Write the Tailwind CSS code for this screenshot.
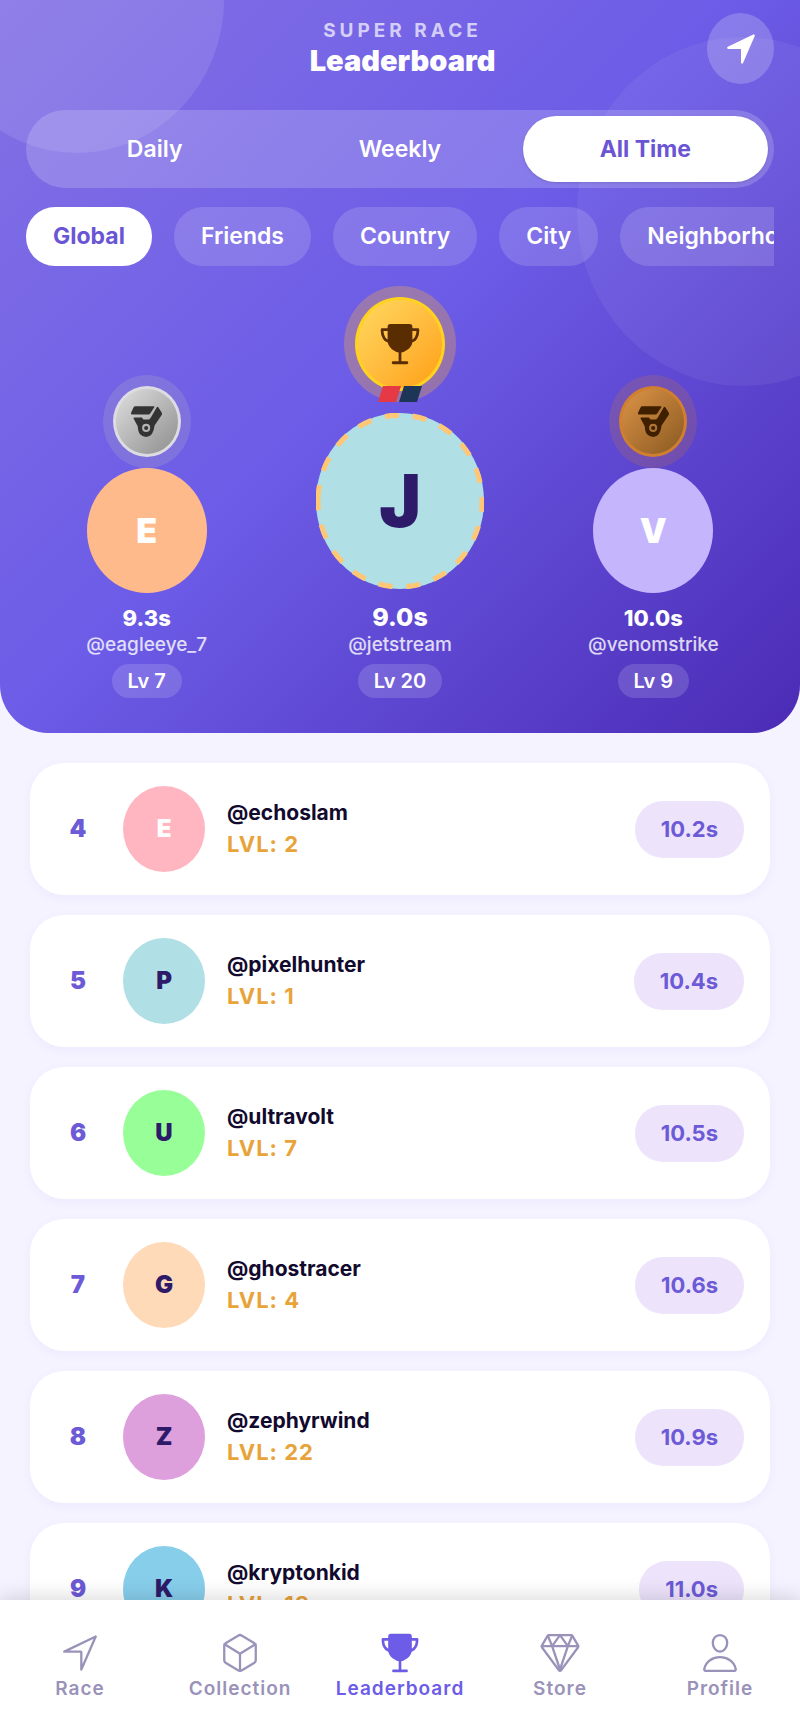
<!DOCTYPE html>
<html lang="en">
<head>
  <meta charset="UTF-8" />
  <meta name="viewport" content="width=device-width, initial-scale=1" />
  <title>Super Race - Leaderboard</title>
  <script src="https://cdn.jsdelivr.net/npm/@tailwindcss/browser@4"></script>
</head>
<body class="h-screen flex flex-col overflow-hidden bg-[#f5f3ff] font-['Inter',sans-serif]">

  <!-- Shared icons -->
  <svg class="hidden">
    <symbol id="icon-trophy" viewBox="0 0 512 512" preserveAspectRatio="none">
      <g fill="none" stroke="currentColor" stroke-width="32" stroke-linecap="round" stroke-linejoin="round">
        <path d="M176 464h160M256 464V336" />
        <path fill="currentColor" d="M384 224c0-50.64-.08-134.63-.12-160a16 16 0 00-16-16l-223.79.26a16 16 0 00-16 15.95c0 30.58-.13 129.17-.13 159.79 0 64.28 83 112 128 112S384 288.28 384 224z" />
        <path d="M128 96H48v16c0 55.22 33.55 112 80 112M384 96h80v16c0 55.22-33.55 112-80 112" />
      </g>
    </symbol>
    <symbol id="icon-medal" viewBox="0 0 92 92" preserveAspectRatio="none">
      <g fill="currentColor" fill-rule="evenodd">
        <path d="M13 1H68Q71 1 69 4L57 22Q55 25 52 25H3Q-1 25 0 21L7 5Q9 1 13 1Z" />
        <path d="M77 3Q79 1 81 4L91 19Q93 23 91 27L70 58Q68 75 62 83Q55 92 45 92Q34 92 27 84Q21 77 20 60L8 38Q6 34 10 34H32Q33 34 34 36L37 40H54L59 34ZM45 53A12 12 0 1 0 45 77A12 12 0 1 0 45 53ZM45 59A6 6 0 1 1 45 71A6 6 0 1 1 45 59Z" />
      </g>
    </symbol>
  </svg>

  <header class="relative shrink-0 overflow-hidden rounded-b-[48px] bg-linear-[135deg,#8371e4_0%,#6c5ce7_48%,#4b2bb5_100%] pt-[13px] pb-[35px] text-white">
    <div class="absolute -left-[70px] -top-[154px] w-[294px] h-[307px] rounded-[50%] bg-white/10"></div>
    <div class="absolute left-[577px] top-[37px] w-[332px] h-[349px] rounded-[50%] bg-white/6"></div>

    <div class="relative px-[26px]">
      <!-- Title -->
      <div class="grid grid-cols-[72px_1fr_67px] items-center">
        <div class="col-start-2 text-center">
          <p class="text-[19px] leading-6 font-bold tracking-[4px] text-white/70">SUPER RACE</p>
          <h1 class="text-[29px] leading-9 font-black">Leaderboard</h1>
        </div>
        <button aria-label="Share location" class="w-[67px] h-[71px] rounded-[50%] bg-white/20 flex items-center justify-center">
          <svg class="w-[34px] h-9" viewBox="0 0 512 512" preserveAspectRatio="none" fill="currentColor"><path d="M272 464a16 16 0 01-16-16.42V264.13a8 8 0 00-8-8H64.41a16.31 16.31 0 01-15.49-10.65 16 16 0 018.41-19.87l384-176.15a16 16 0 0121.22 21.19l-176 384A16 16 0 01272 464z" /></svg>
        </button>
      </div>

      <!-- Period -->
      <div class="mt-[26px] grid grid-cols-3 rounded-[39px] bg-white/18 p-1.5 text-[23px] font-semibold">
        <button class="h-[66px] rounded-[33px]">Daily</button>
        <button class="h-[66px] rounded-[33px]">Weekly</button>
        <button class="h-[66px] rounded-[33px] bg-white text-[#6a55d4] font-bold shadow-sm">All Time</button>
      </div>

      <!-- Scope -->
      <div class="mt-[19px] flex gap-[22px] overflow-x-auto [scrollbar-width:none] text-[23px] font-semibold">
        <button class="h-[59px] shrink-0 rounded-[29px] px-[27px] bg-white text-[#6a55d4] font-bold">Global</button>
        <button class="h-[59px] shrink-0 rounded-[29px] px-[27px] bg-white/15">Friends</button>
        <button class="h-[59px] shrink-0 rounded-[29px] px-[27px] bg-white/15">Country</button>
        <button class="h-[59px] shrink-0 rounded-[29px] px-[27px] bg-white/15">City</button>
        <button class="h-[59px] shrink-0 rounded-[29px] px-[27px] bg-white/15">Neighborhood</button>
      </div>
    </div>

    <!-- Podium -->
    <section class="relative mt-5 px-5 grid grid-cols-3 items-end text-center">
      <div class="flex flex-col items-center">
        <div class="rounded-[50%] bg-[#c0c0c0]/20 px-[10px] py-[11px]">
          <div class="w-[68px] h-[71px] rounded-[50%] border-3 border-[#dcdce2] bg-linear-135 from-[#e0e0e0] to-[#8e8e8e] text-[#333] flex items-center justify-center">
            <svg class="w-[31px] h-[31px]"><use href="#icon-medal" /></svg>
          </div>
        </div>
        <div class="w-[120px] h-[125px] rounded-[50%] bg-[#ffba8c] flex items-center justify-center text-[34px] font-black">E</div>
        <p class="mt-[11px] text-[22px] leading-7 font-extrabold">9.3s</p>
        <p class="mt-px text-[19px] leading-6 font-medium text-white/80">@eagleeye_7</p>
        <p class="mt-[7px] h-[34px] rounded-[17px] bg-white/15 px-4 text-[20px] leading-[34px] font-semibold">Lv 7</p>
      </div>

      <div class="flex flex-col items-center">
        <div class="relative rounded-[50%] bg-[#ffb432]/30 p-[11px]">
          <div class="w-[90px] h-[94px] rounded-[50%] border-3 border-[#ffd21f] bg-linear-135 from-[#ffd95e] to-[#ff9f0a] text-[#5a2d00] flex items-center justify-center">
            <svg class="w-[44px] h-[46px]"><use href="#icon-trophy" /></svg>
          </div>
          <svg class="absolute left-[34px] bottom-0 w-[45px] h-4" viewBox="0 0 45 16"><path fill="#e63946" d="M5 0H23L18 16H0Z" /><path fill="#1d3557" d="M26 0H44L39 16H21Z" /></svg>
        </div>
        <div class="mt-[11px]">
          <svg class="w-[168px] h-[176px]" viewBox="0 0 168 168" preserveAspectRatio="none">
            <circle cx="84" cy="84" r="84" fill="#b0dfe5" />
            <circle cx="84" cy="84" r="82" fill="none" stroke="#fdc776" stroke-width="5" stroke-dasharray="14 14" transform="rotate(181 84 84)" />
            <text x="84" y="109" text-anchor="middle" fill="#2d1b69" class="text-[70px] font-black">J</text>
          </svg>
        </div>
        <p class="mt-[14px] text-[25px] leading-7 font-extrabold">9.0s</p>
        <p class="mt-[2px] text-[19px] leading-6 font-medium text-white/80">@jetstream</p>
        <p class="mt-[7px] h-[34px] rounded-[17px] bg-white/15 px-4 text-[20px] leading-[34px] font-semibold">Lv 20</p>
      </div>

      <div class="flex flex-col items-center">
        <div class="rounded-[50%] bg-[#cd7f32]/20 px-[10px] py-[11px]">
          <div class="w-[68px] h-[71px] rounded-[50%] border-3 border-[#d07f30] bg-linear-135 from-[#dd9447] to-[#8b5a22] text-[#3e1f00] flex items-center justify-center">
            <svg class="w-[31px] h-[31px]"><use href="#icon-medal" /></svg>
          </div>
        </div>
        <div class="w-[120px] h-[125px] rounded-[50%] bg-[#c4b5fd] flex items-center justify-center text-[34px] font-black">V</div>
        <p class="mt-[11px] text-[22px] leading-7 font-extrabold">10.0s</p>
        <p class="mt-px text-[19px] leading-6 font-medium text-white/80">@venomstrike</p>
        <p class="mt-[7px] h-[34px] rounded-[17px] bg-white/15 px-4 text-[20px] leading-[34px] font-semibold">Lv 9</p>
      </div>
    </section>
  </header>

  <!-- Ranking list, filled below -->
  <main class="flex-1 min-h-0 overflow-y-auto [scrollbar-width:none] px-[30px] pt-[30px] pb-5">
    <ol id="rankList" class="flex flex-col gap-5"></ol>
  </main>

  <!-- Bottom navigation -->
  <nav class="relative z-10 shrink-0 h-[131px] bg-white shadow-[0_-2px_20px_rgba(0,0,0,0.16)] grid grid-cols-5 pt-[31px] text-[19px] leading-6 font-semibold tracking-[1px] text-[#9a92b9]">
    <a href="#" class="flex flex-col items-center gap-[2px]">
      <svg class="w-[42px] h-11" viewBox="0 0 512 512" preserveAspectRatio="none" fill="none" stroke="currentColor" stroke-width="28" stroke-linecap="round" stroke-linejoin="round"><path d="M448 64L64 240.14h200a8 8 0 018 8V448z" /></svg>
      Race
    </a>
    <a href="#" class="flex flex-col items-center gap-[2px]">
      <svg class="w-[42px] h-11" viewBox="0 0 512 512" preserveAspectRatio="none" fill="none" stroke="currentColor" stroke-width="28" stroke-linecap="round" stroke-linejoin="round"><path d="M448 341.37V170.61A32 32 0 00432.11 143l-152-88.46a47.94 47.94 0 00-48.24 0L79.89 143A32 32 0 0064 170.61v170.76A32 32 0 0079.89 369l152 88.46a48 48 0 0048.24 0l152-88.46A32 32 0 00448 341.37z" /><path d="M69 153.99l187 110 187-110M256 463.99v-200" /></svg>
      Collection
    </a>
    <a href="#" class="flex flex-col items-center gap-[2px] text-[#6c5ce7]">
      <svg class="w-[42px] h-11"><use href="#icon-trophy" /></svg>
      Leaderboard
    </a>
    <a href="#" class="flex flex-col items-center gap-[2px]">
      <svg class="w-[42px] h-11" viewBox="0 0 512 512" preserveAspectRatio="none" fill="none" stroke="currentColor" stroke-width="28" stroke-linecap="round" stroke-linejoin="round"><path d="M35.42 188.21l207.75 269.46a16.17 16.17 0 0025.66 0l207.75-269.46a16.52 16.52 0 00.95-18.75L407.06 55.71A16.22 16.22 0 00393.27 48H118.73a16.22 16.22 0 00-13.79 7.71L34.47 169.46a16.52 16.52 0 00.95 18.75zM48 176h416" /><path d="M400 64l-48 112-96-128M112 64l48 112 96-128M256 448l-96-272M256 448l96-272" /></svg>
      Store
    </a>
    <a href="#" class="flex flex-col items-center gap-[2px]">
      <svg class="w-[42px] h-11" viewBox="0 0 512 512" preserveAspectRatio="none" fill="none" stroke="currentColor" stroke-width="28" stroke-linecap="round" stroke-linejoin="round"><path d="M344 144c-3.92 52.87-44 96-88 96s-84.15-43.12-88-96c-4-55 35-96 88-96s92 42 88 96z" /><path d="M256 304c-87 0-175.3 48-191.64 138.6C62.39 453.52 68.57 464 80 464h352c11.44 0 17.62-10.48 15.65-21.4C431.3 352 343 304 256 304z" /></svg>
      Profile
    </a>
  </nav>

  <script>
    const players = [
      { rank: 4, name: "echoslam", level: 2, time: "10.2s", avatar: "bg-[#ffb6c1] text-white" },
      { rank: 5, name: "pixelhunter", level: 1, time: "10.4s", avatar: "bg-[#b0dfe5] text-[#2d1b69]" },
      { rank: 6, name: "ultravolt", level: 7, time: "10.5s", avatar: "bg-[#98ff98] text-[#2d1b69]" },
      { rank: 7, name: "ghostracer", level: 4, time: "10.6s", avatar: "bg-[#ffdab9] text-[#2d1b69]" },
      { rank: 8, name: "zephyrwind", level: 22, time: "10.9s", avatar: "bg-[#dda0dd] text-[#2d1b69]" },
      { rank: 9, name: "kryptonkid", level: 18, time: "11.0s", avatar: "bg-[#87ceeb] text-[#2d1b69]" }
    ];

    document.getElementById("rankList").innerHTML = players.map(p => `
      <li class="h-[132px] shrink-0 flex items-center rounded-[34px] bg-white px-[26px] shadow-[0_3px_10px_rgba(108,92,231,0.06)]">
        <span class="w-[44px] text-center text-[24px] font-black text-[#6c5ad6]">${p.rank}</span>
        <span class="ml-[23px] w-[82px] h-[86px] rounded-[50%] flex items-center justify-center text-[24px] font-black ${p.avatar}">${p.name[0].toUpperCase()}</span>
        <div class="ml-[22px] flex-1">
          <p class="text-[21px] leading-[30px] font-bold text-[#120a2e]">@${p.name}</p>
          <p class="text-[22px] leading-8 font-bold tracking-[1px] text-[#e8a33a]">LVL: ${p.level}</p>
        </div>
        <span class="h-[57px] rounded-[28px] bg-[#ede4fc] px-[26px] text-[22px] leading-[57px] font-bold text-[#6c5ad6]">${p.time}</span>
      </li>`).join("");
  </script>

</body>
</html>
